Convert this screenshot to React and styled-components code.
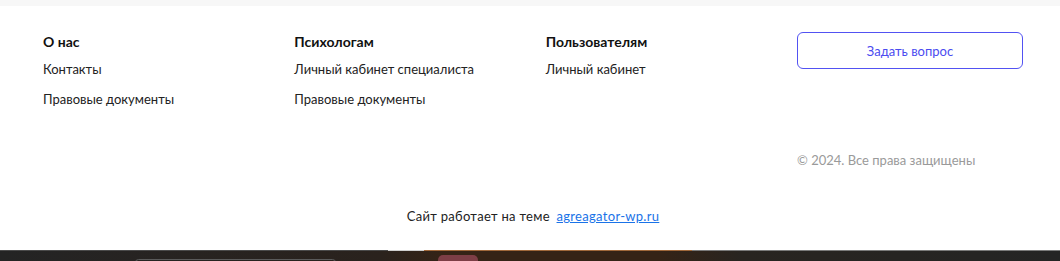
import styled, { createGlobalStyle } from "styled-components";

const GlobalStyle = createGlobalStyle`
  body {
    margin: 0;
    background: #fff;
    font-family: "Lato", "Liberation Sans", sans-serif;
    color: #222;
  }
`;

const columns = [
  { title: "О нас", links: ["Контакты", "Правовые документы"] },
  { title: "Психологам", links: ["Личный кабинет специалиста", "Правовые документы"] },
  { title: "Пользователям", links: ["Личный кабинет"] },
];

const App = () => (
  <>
    <GlobalStyle />
    <TopStrip />
    <Footer>
      <Grid>
        {columns.map((col) => (
          <Column key={col.title}>
            <Heading>{col.title}</Heading>
            {col.links.map((l) => (
              <FooterLink key={l} href="#">
                {l}
              </FooterLink>
            ))}
          </Column>
        ))}
        <Column>
          <AskButton>Задать вопрос</AskButton>
        </Column>
      </Grid>
      <CopyRow>
        <Copyright>© 2024. Все права защищены</Copyright>
      </CopyRow>
      <Credits>
        Сайт работает на теме <ThemeLink href="#">agreagator-wp.ru</ThemeLink>
      </Credits>
    </Footer>
    <BottomStrip>
      <svg width="1060" height="11" viewBox="0 0 1060 11">
        <defs>
          <linearGradient id="glow" x1="0" x2="1" y1="0" y2="0">
            <stop offset="0" stopColor="#242424" />
            <stop offset="0.36" stopColor="#2a221d" />
            <stop offset="0.42" stopColor="#352316" />
            <stop offset="0.62" stopColor="#352316" />
            <stop offset="0.7" stopColor="#282420" />
            <stop offset="1" stopColor="#242424" />
          </linearGradient>
        </defs>
        <rect x="0" y="0" width="1060" height="11" fill="url(#glow)" />
        <rect x="0" y="0" width="1060" height="1" fill="#4a4a4a" />
        <rect x="388" y="0" width="36" height="1" fill="#cfcfcf" />
        <rect x="424" y="0" width="268" height="1" fill="#a0683a" />
        <rect x="692" y="0" width="368" height="1" fill="#7a7a7a" />
        <rect x="438" y="5" width="40" height="10" rx="5" fill="#7d3e46" />
        <rect x="135.5" y="9.5" width="200" height="6" rx="3" fill="none" stroke="#5a5a5a" />
      </svg>
    </BottomStrip>
  </>
);

const TopStrip = styled.div`
  height: 6px;
  background: #f7f7f7;
`;

const Footer = styled.footer`
  padding: 26px 37px 0 43px;
  height: 244px;
  box-sizing: border-box;
`;

const Grid = styled.div`
  display: grid;
  grid-template-columns: repeat(4, 226px);
  justify-content: space-between;
`;

const Column = styled.div`
  display: flex;
  flex-direction: column;
  align-items: flex-start;
`;

const Heading = styled.div`
  font-size: 14px;
  font-weight: 700;
  line-height: 20px;
  color: #111;
  margin-bottom: 8px;
`;

const FooterLink = styled.a`
  font-size: 13px;
  line-height: 18px;
  color: #222;
  text-decoration: none;
  margin-bottom: 12px;
`;

const AskButton = styled.button`
  width: 226px;
  height: 37px;
  border: 1px solid #5252f2;
  border-radius: 6px;
  background: #fff;
  color: #4b4bf0;
  font-family: inherit;
  font-size: 13px;
  cursor: pointer;
`;

const CopyRow = styled.div`
  display: flex;
  justify-content: flex-end;
  margin-top: 31px;
`;

const Copyright = styled.div`
  width: 226px;
  font-size: 13px;
  line-height: 18px;
  color: #9a9a9a;
`;

const Credits = styled.div`
  margin-top: 38px;
  text-align: center;
  font-size: 13px;
  line-height: 18px;
  letter-spacing: 0.3px;
  color: #222;
`;

const ThemeLink = styled.a`
  color: #1a73e8;
  text-decoration: underline;
  margin-left: 3px;
`;

const BottomStrip = styled.div`
  height: 11px;
  overflow: hidden;
  svg {
    display: block;
  }
`;

export default App;
